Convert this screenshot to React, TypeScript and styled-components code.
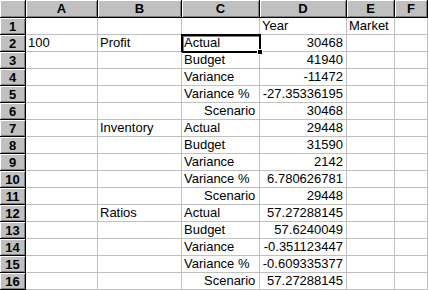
import React from 'react';
import styled, { createGlobalStyle, css } from 'styled-components';

const GlobalStyle = createGlobalStyle`
  html, body {
    margin: 0;
    padding: 0;
    background: #fff;
  }
  body {
    font-family: "Liberation Sans", Arial, sans-serif;
  }
`;

const columns = ['A', 'B', 'C', 'D', 'E', 'F'];

type Row = {
  a?: string;
  b?: string;
  c?: string;
  d?: string;
  e?: string;
  indent?: boolean;
};

const rows: Row[] = [
  { d: 'Year', e: 'Market' },
  { a: '100', b: 'Profit', c: 'Actual', d: '30468' },
  { c: 'Budget', d: '41940' },
  { c: 'Variance', d: '-11472' },
  { c: 'Variance %', d: '-27.35336195' },
  { c: 'Scenario', d: '30468', indent: true },
  { b: 'Inventory', c: 'Actual', d: '29448' },
  { c: 'Budget', d: '31590' },
  { c: 'Variance', d: '2142' },
  { c: 'Variance %', d: '6.780626781' },
  { c: 'Scenario', d: '29448', indent: true },
  { b: 'Ratios', c: 'Actual', d: '57.27288145' },
  { c: 'Budget', d: '57.6240049' },
  { c: 'Variance', d: '-0.351123447' },
  { c: 'Variance %', d: '-0.609335377' },
  { c: 'Scenario', d: '57.27288145', indent: true },
];

const Sheet = styled.div`
  display: grid;
  grid-template-columns: 26px 72px 84px 78px 87px 48px 33px;
  grid-template-rows: 18px repeat(16, 17px);
  width: 428px;
  height: 290px;
  overflow: hidden;
  background: #fff;
`;

const headerLook = css`
  display: flex;
  align-items: center;
  justify-content: center;
  box-sizing: border-box;
  background: #c0c0c0;
  border-right: 1px solid #000;
  border-bottom: 1px solid #000;
  box-shadow: inset 1px 1px 0 #fff, inset -1px -1px 0 #808080;
  font-family: "Liberation Sans", Arial, sans-serif;
  font-weight: bold;
  font-size: 13px;
  color: #000;
`;

const Corner = styled.div`
  ${headerLook}
`;

const ColHeader = styled.div`
  ${headerLook}
`;

const RowHeader = styled.div`
  ${headerLook}
  padding-top: 1px;
`;

const Cell = styled.div<{ $align?: 'left' | 'right'; $indent?: boolean; $selected?: boolean }>`
  position: relative;
  display: flex;
  align-items: flex-end;
  justify-content: ${(p) => (p.$align === 'right' ? 'flex-end' : 'flex-start')};
  box-sizing: border-box;
  border-right: 1px solid #c0c0c0;
  border-bottom: 1px solid #c0c0c0;
  padding: 0 3px 1px ${(p) => (p.$indent ? '22px' : '2px')};
  font-size: 13px;
  line-height: 15px;
  color: #000;
  white-space: nowrap;

  ${(p) =>
    p.$selected &&
    css`
      &::after {
        content: '';
        position: absolute;
        left: -1px;
        top: -1px;
        right: -2px;
        bottom: -2px;
        border: 2px solid #000;
        box-shadow: inset 1px 1px 0 #808080;
        pointer-events: none;
      }
      &::before {
        content: '';
        position: absolute;
        right: -4px;
        bottom: -4px;
        width: 4px;
        height: 4px;
        background: #000;
        border: 1px solid #fff;
        z-index: 2;
      }
    `}
`;

export default function App() {
  return (
    <>
      <GlobalStyle />
      <Sheet>
        <Corner />
        {columns.map((c) => (
          <ColHeader key={c}>{c}</ColHeader>
        ))}
        {rows.map((r, i) => (
          <React.Fragment key={i}>
            <RowHeader>{i + 1}</RowHeader>
            <Cell>{r.a}</Cell>
            <Cell>{r.b}</Cell>
            <Cell $indent={r.indent} $selected={i === 1}>
              {r.c}
            </Cell>
            <Cell $align={r.d && i > 0 ? 'right' : 'left'}>{r.d}</Cell>
            <Cell>{r.e}</Cell>
            <Cell />
          </React.Fragment>
        ))}
      </Sheet>
    </>
  );
}
